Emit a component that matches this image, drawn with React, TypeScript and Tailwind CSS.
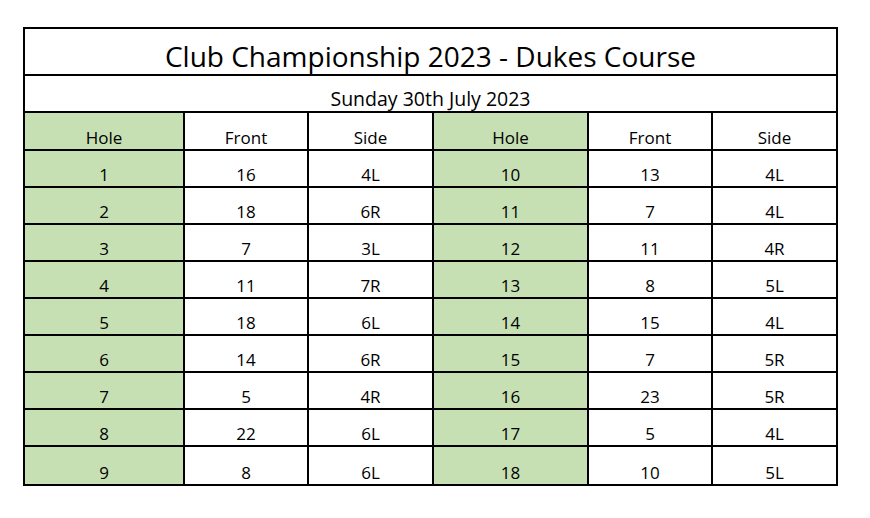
const ROWS: [number, number, string, number, number, string][] = [
  [1, 16, "4L", 10, 13, "4L"],
  [2, 18, "6R", 11, 7, "4L"],
  [3, 7, "3L", 12, 11, "4R"],
  [4, 11, "7R", 13, 8, "5L"],
  [5, 18, "6L", 14, 15, "4L"],
  [6, 14, "6R", 15, 7, "5R"],
  [7, 5, "4R", 16, 23, "5R"],
  [8, 22, "6L", 17, 5, "4L"],
  [9, 8, "6L", 18, 10, "5L"],
];

const HEADERS = ["Hole", "Front", "Side", "Hole", "Front", "Side"];

function Cell({ value, index }: { value: string | number; index: number }) {
  const green = index === 0 || index === 3;
  return (
    <div
      className={
        "flex items-end justify-center pb-[3px] leading-none " +
        (green ? "bg-[#c6e0b4] " : "bg-white ") +
        (index < 5 ? "border-r-2 border-black" : "")
      }
    >
      {value}
    </div>
  );
}

export default function App() {
  return (
    <div
      className="min-h-[518px] w-[870px] bg-white pl-[23px] pt-[27px] text-black"
      style={{ fontFamily: '"Open Sans", "Noto Sans", sans-serif' }}
    >
      <div className="w-[815px] border-2 border-black">
        <div className="flex h-[47px] items-end justify-center border-b-2 border-black pb-[4px] text-[28px] leading-none">
          Club Championship 2023 - Dukes Course
        </div>
        <div className="flex h-[37px] items-end justify-center border-b-2 border-black pb-[3px] text-[19.5px] leading-none">
          Sunday 30th July 2023
        </div>
        <div className="grid h-[38px] grid-cols-[160px_124px_125px_155px_124px_123px] border-b-2 border-black text-[17px]">
          {HEADERS.map((h, i) => (
            <Cell key={i} value={h} index={i} />
          ))}
        </div>
        {ROWS.map((row, r) => (
          <div
            key={r}
            className={
              "grid h-[37px] grid-cols-[160px_124px_125px_155px_124px_123px] text-[17px] " +
              (r < ROWS.length - 1 ? "border-b-2 border-black" : "")
            }
          >
            {row.map((v, i) => (
              <Cell key={i} value={v} index={i} />
            ))}
          </div>
        ))}
      </div>
    </div>
  );
}
